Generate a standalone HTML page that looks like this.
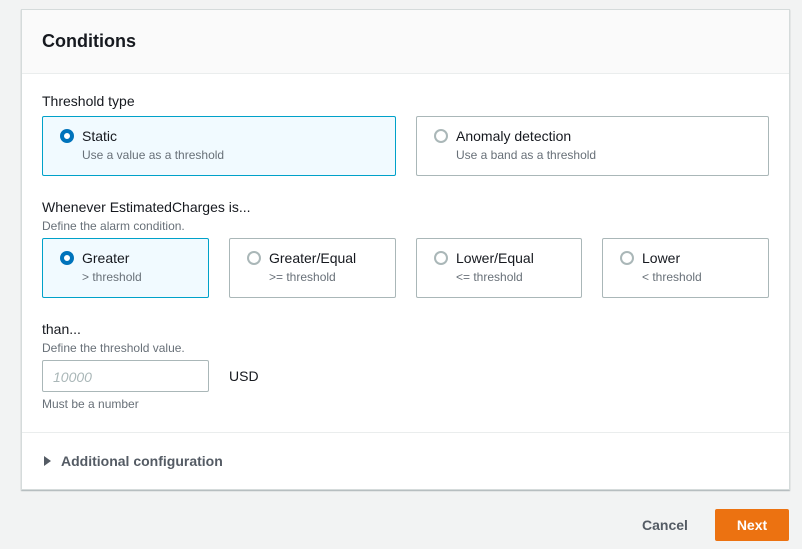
<!DOCTYPE html>
<html><head><style>
*{box-sizing:border-box;margin:0;padding:0}
body{width:802px;height:549px;background:#f2f3f3;font-family:"Liberation Sans",Arial,sans-serif;position:relative;overflow:hidden;color:#16191f}
.card{position:absolute;left:21px;top:9px;width:769px;height:481px;background:#fff;border:1px solid #d5dbdb;box-shadow:0 1px 1px rgba(0,28,36,.3)}
.hdr{height:64px;background:#fafafa;border-bottom:1px solid #eaeded;padding:20px 20px}
.hdr h2{font-size:18px;font-weight:bold;line-height:22px}
.a{position:absolute}
.lbl{font-size:14px;color:#16191f}
.desc{font-size:12px;color:#687078}
.box{position:absolute;border:1px solid #aab7b8;border-radius:2px;background:#fff}
.box.sel{border-color:#00a1c9;background:#f1faff}
.box .r{position:absolute;left:17px;top:12px;width:14px;height:14px;border-radius:50%;border:2px solid #aab7b8;background:#fff}
.box.sel .r{border:4px solid #0073bb}
.box .t{position:absolute;left:39px;top:11px;font-size:14px;color:#16191f}
.box .d{position:absolute;left:39px;top:31px;font-size:12px;color:#687078}
</style></head><body>
<div class="card">
<div class="hdr"><h2>Conditions</h2></div>
</div>
<div class="a lbl" style="left:42px;top:93px">Threshold type</div>
<div class="box sel" style="left:42px;top:116px;width:354px;height:60px"><div class="r"></div><div class="t">Static</div><div class="d">Use a value as a threshold</div></div>
<div class="box" style="left:416px;top:116px;width:353px;height:60px"><div class="r"></div><div class="t">Anomaly detection</div><div class="d">Use a band as a threshold</div></div>
<div class="a lbl" style="left:42px;top:199px">Whenever EstimatedCharges is...</div>
<div class="a desc" style="left:42px;top:219px">Define the alarm condition.</div>
<div class="box sel" style="left:42px;top:238px;width:167px;height:60px"><div class="r"></div><div class="t">Greater</div><div class="d">&gt; threshold</div></div>
<div class="box" style="left:229px;top:238px;width:167px;height:60px"><div class="r"></div><div class="t">Greater/Equal</div><div class="d">&gt;= threshold</div></div>
<div class="box" style="left:416px;top:238px;width:166px;height:60px"><div class="r"></div><div class="t">Lower/Equal</div><div class="d">&lt;= threshold</div></div>
<div class="box" style="left:602px;top:238px;width:167px;height:60px"><div class="r"></div><div class="t">Lower</div><div class="d">&lt; threshold</div></div>
<div class="a lbl" style="left:42px;top:321px">than...</div>
<div class="a desc" style="left:42px;top:341px">Define the threshold value.</div>
<div class="a" style="left:42px;top:360px;width:167px;height:32px;border:1px solid #aab7b8;border-radius:2px;padding:8px 10px;font-size:14px;font-style:italic;color:#aab7b8">10000</div>
<div class="a lbl" style="left:229px;top:368px">USD</div>
<div class="a desc" style="left:42px;top:397px">Must be a number</div>
<div class="a" style="left:22px;top:432px;width:767px;height:1px;background:#eaeded"></div>
<div class="a" style="left:44px;top:456px;width:0;height:0;border-left:7px solid #545b64;border-top:5px solid transparent;border-bottom:5px solid transparent"></div>
<div class="a" style="left:61px;top:453px;font-size:14px;font-weight:bold;color:#545b64">Additional configuration</div>
<div class="a" style="left:642px;top:517px;font-size:14px;font-weight:bold;color:#545b64">Cancel</div>
<div class="a" style="left:715px;top:509px;width:74px;height:32px;background:#ec7211;border-radius:2px;color:#fff;font-size:14px;font-weight:bold;text-align:center;line-height:32px">Next</div>
</body></html>
